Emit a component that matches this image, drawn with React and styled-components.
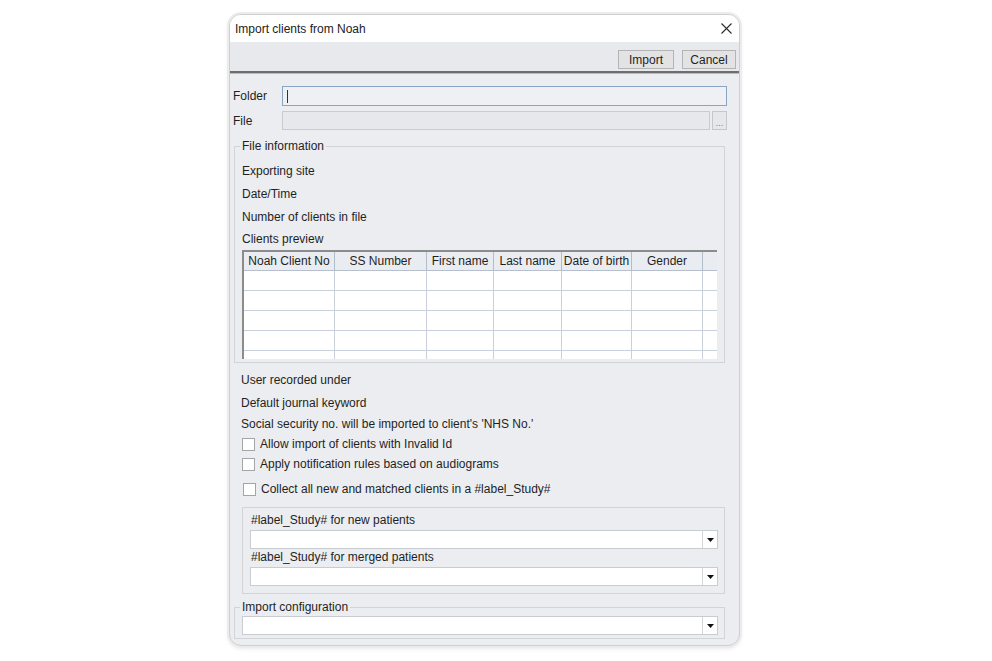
import React from "react";
import styled, { createGlobalStyle } from "styled-components";

// page defaults
const Global = createGlobalStyle`
  html, body {
    margin: 0;
    padding: 0;
    background: #ffffff;
  }
  body {
    font-family: "Liberation Sans", Arial, sans-serif;
    font-size: 12px;
    color: #1f1f1f;
  }
`;

const Page = styled.div`
  padding: 14px 0 0 229px;
  height: 661px;
  box-sizing: border-box;
`;

// dialog frame with rounded corners and a soft grey rim
const Dialog = styled.div`
  width: 511px;
  height: 632px;
  box-sizing: border-box;
  border: 1px solid #cfcfcf;
  border-radius: 12px;
  box-shadow: 0 0 0 2px #ececec, 0 2px 5px rgba(0, 0, 0, 0.12);
  overflow: hidden;
  background: #ebedf0;
  display: flex;
  flex-direction: column;
`;

const TitleBar = styled.div`
  height: 27px;
  flex: none;
  background: #ffffff;
  display: flex;
  align-items: center;
  justify-content: space-between;
  padding: 0 6px 0 5px;
`;

const Title = styled.span`
  font-size: 12px;
  color: #222;
`;

const CloseBtn = styled.div`
  width: 13px;
  height: 13px;
  display: flex;
  align-items: center;
  justify-content: center;
`;

const Toolbar = styled.div`
  height: 31px;
  flex: none;
  box-sizing: border-box;
  background: #e8e9ec;
  display: flex;
  justify-content: flex-end;
  align-items: flex-start;
  gap: 8px;
  padding: 8px 3px 0 0;
  border-bottom: 2px solid #6e6e6e;
`;

const Button = styled.button`
  height: 19px;
  width: ${({ w }) => w}px;
  box-sizing: border-box;
  padding: 0;
  border: 1px solid #b4b4b4;
  background: #e3e3e3;
  font-family: "Liberation Sans", Arial, sans-serif;
  font-size: 12px;
  color: #1f1f1f;
`;

const Shade = styled.div`
  height: 1px;
  flex: none;
  background: #b9bbbf;
`;

const Body = styled.div`
  padding: 12px 12px 0 3px;
  display: flex;
  flex-direction: column;
`;

const FieldRow = styled.div`
  display: flex;
  align-items: center;
  height: ${({ h }) => h}px;
  margin-top: ${({ mt }) => mt || 0}px;
`;

const FieldLabel = styled.div`
  width: 49px;
  flex: none;
`;

const TextInput = styled.div`
  flex: 1;
  height: 100%;
  box-sizing: border-box;
  border: 1px solid ${({ disabled }) => (disabled ? "#cacbcd" : "#8aa4c4")};
  background: ${({ disabled }) => (disabled ? "#e7e8eb" : "#eef0f3")};
  display: flex;
  align-items: center;
  padding-left: 4px;
`;

const Caret = styled.div`
  width: 1px;
  height: 13px;
  background: #333;
`;

const BrowseBtn = styled.div`
  width: 15px;
  height: 100%;
  margin-left: 2px;
  box-sizing: border-box;
  border: 1px solid #c6c7ca;
  background: #e6e7ea;
  font-size: 9px;
  color: #777;
  display: flex;
  align-items: flex-end;
  justify-content: center;
  line-height: 12px;
`;

const Group = styled.fieldset`
  margin: ${({ m }) => m};
  padding: ${({ p }) => p};
  border: 1px solid #d2d4d8;
  min-width: 0;
  display: flex;
  flex-direction: column;
`;

const Legend = styled.legend`
  padding: 0 2px;
  margin-left: -2px;
  line-height: 14px;
  font-size: 12px;
`;

const InfoLine = styled.div`
  height: ${({ h }) => h || 23}px;
  display: flex;
  align-items: center;
  padding-left: ${({ pl }) => pl || 0}px;
  margin-top: ${({ mt }) => mt || 0}px;
  white-space: nowrap;
`;

// clients preview grid
const cols = "91px 92px 67px 68px 70px 71px 1fr";

const TableBox = styled.div`
  height: 109px;
  box-sizing: border-box;
  border-top: 2px solid #8c8c8c;
  border-left: 2px solid #8c8c8c;
  background: #ffffff;
  overflow: hidden;
`;

const HeadRow = styled.div`
  display: grid;
  grid-template-columns: ${cols};
  height: 18px;
  background: #e9ecf1;
  border-bottom: 1px solid #b7bfcc;
`;

const HeadCell = styled.div`
  border-right: 1px solid #b3bccb;
  display: flex;
  align-items: center;
  justify-content: center;
  white-space: nowrap;
  overflow: hidden;
  &:last-child {
    border-right: none;
  }
`;

const DataRow = styled.div`
  display: grid;
  grid-template-columns: ${cols};
  height: 20px;
  box-sizing: border-box;
  border-bottom: 1px solid #c9d0dc;
`;

const DataCell = styled.div`
  border-right: 1px solid #c9d0dc;
  &:last-child {
    border-right: none;
  }
`;

const CheckRow = styled.label`
  display: flex;
  align-items: center;
  gap: ${({ gap }) => gap}px;
  height: 20px;
  padding-left: ${({ pl }) => pl}px;
  margin-top: ${({ mt }) => mt || 0}px;
`;

const Box = styled.span`
  width: 13px;
  height: 13px;
  box-sizing: border-box;
  border: 1px solid #a3a5a9;
  background: #ffffff;
  flex: none;
`;

const SubPanel = styled.div`
  margin: 8px 2px 0 9px;
  padding: 4px 6px 7px 7px;
  border: 1px solid #d2d4d8;
  display: flex;
  flex-direction: column;
`;

const SmallLabel = styled.div`
  height: 16px;
  display: flex;
  align-items: center;
  padding-left: 1px;
`;

const Combo = styled.div`
  height: 19px;
  margin-top: ${({ mt }) => mt || 0}px;
  box-sizing: border-box;
  border: 1px solid #c9ccd1;
  background: #ffffff;
  display: flex;
  justify-content: flex-end;
`;

const ComboArrow = styled.div`
  width: 14px;
  border-left: 1px solid #d3d5d9;
  display: flex;
  align-items: center;
  justify-content: center;
`;

const Arrow = () => (
  <svg width="7" height="4" viewBox="0 0 7 4">
    <path d="M0 0H7L3.5 4Z" fill="#111" />
  </svg>
);

const ComboBox = ({ mt }) => (
  <Combo mt={mt}>
    <ComboArrow>
      <Arrow />
    </ComboArrow>
  </Combo>
);

const headers = [
  "Noah Client No",
  "SS Number",
  "First name",
  "Last name",
  "Date of birth",
  "Gender",
  "",
];

export default function App() {
  return (
    <Page>
      <Global />
      <Dialog>
        <TitleBar>
          <Title>Import clients from Noah</Title>
          <CloseBtn>
            <svg width="11" height="11" viewBox="0 0 11 11">
              <path d="M0.5 0.5L10.5 10.5M10.5 0.5L0.5 10.5" stroke="#2b2b2b" strokeWidth="1.1" />
            </svg>
          </CloseBtn>
        </TitleBar>

        <Toolbar>
          <Button w={56}>Import</Button>
          <Button w={54}>Cancel</Button>
        </Toolbar>
        <Shade />

        <Body>
          <FieldRow h={20}>
            <FieldLabel>Folder</FieldLabel>
            <TextInput>
              <Caret />
            </TextInput>
          </FieldRow>
          <FieldRow h={19} mt={5}>
            <FieldLabel>File</FieldLabel>
            <TextInput disabled />
            <BrowseBtn>...</BrowseBtn>
          </FieldRow>

          <Group m="9px 2px 0 1px" p="6px 7px 3px 7px">
            <Legend>File information</Legend>
            <InfoLine>Exporting site</InfoLine>
            <InfoLine>Date/Time</InfoLine>
            <InfoLine>Number of clients in file</InfoLine>
            <InfoLine h={22}>Clients preview</InfoLine>
            <TableBox>
              <HeadRow>
                {headers.map((h, i) => (
                  <HeadCell key={i}>{h}</HeadCell>
                ))}
              </HeadRow>
              {[0, 1, 2, 3, 4].map((r) => (
                <DataRow key={r}>
                  {headers.map((_, i) => (
                    <DataCell key={i} />
                  ))}
                </DataRow>
              ))}
            </TableBox>
          </Group>

          <InfoLine pl={8} mt={5}>User recorded under</InfoLine>
          <InfoLine pl={8}>Default journal keyword</InfoLine>
          <InfoLine pl={8} h={20}>
            Social security no. will be imported to client's 'NHS No.'
          </InfoLine>
          <CheckRow pl={9} gap={5}>
            <Box />
            Allow import of clients with Invalid Id
          </CheckRow>
          <CheckRow pl={9} gap={5}>
            <Box />
            Apply notification rules based on audiograms
          </CheckRow>
          <CheckRow pl={10} gap={5} mt={5}>
            <Box />
            Collect all new and matched clients in a #label_Study#
          </CheckRow>

          <SubPanel>
            <SmallLabel>#label_Study# for new patients</SmallLabel>
            <ComboBox mt={2} />
            <SmallLabel>#label_Study# for merged patients</SmallLabel>
            <ComboBox mt={2} />
          </SubPanel>

          <Group m="6px 2px 0 1px" p="2px 6px 3px 7px">
            <Legend>Import configuration</Legend>
            <ComboBox />
          </Group>
        </Body>
      </Dialog>
    </Page>
  );
}
